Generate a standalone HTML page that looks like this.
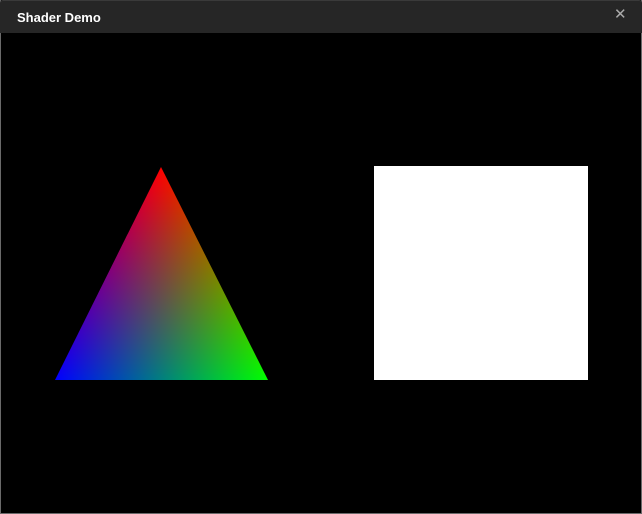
<!DOCTYPE html>
<html><head><style>
html,body{margin:0;padding:0;width:642px;height:514px;background:#000;overflow:hidden}
.frame{position:absolute;left:0;top:0;width:642px;height:514px;box-sizing:border-box;border:1px solid #6a6a6a;border-top:none}
.bar{position:absolute;left:0;top:0;width:642px;height:33px;background:#262626;border-top:1px solid #3a3a3a;box-sizing:border-box;border-radius:3px 3px 0 0}
.t{position:absolute;left:17px;top:9px;color:#fff;font:bold 13px "Liberation Sans",sans-serif}
.x{position:absolute;left:614px;top:4px;color:#aaa;font:15px "DejaVu Sans",sans-serif}
.sq{position:absolute;left:374px;top:166px;width:214px;height:214px;background:#fff}
svg{position:absolute;left:55px;top:167px}
</style></head><body>
<div class="frame"></div>
<div class="bar"><div class="t">Shader Demo</div><div class="x">✕</div></div>
<svg width="213" height="213" viewBox="0 0 213 213">
<defs>
<linearGradient id="r" gradientUnits="userSpaceOnUse" x1="106" y1="0" x2="106" y2="213"><stop offset="0" stop-color="#f00"/><stop offset="1" stop-color="#000"/></linearGradient>
<linearGradient id="b" gradientUnits="userSpaceOnUse" x1="0" y1="213" x2="170" y2="127.6"><stop offset="0" stop-color="#00f"/><stop offset="1" stop-color="#000"/></linearGradient>
<linearGradient id="g" gradientUnits="userSpaceOnUse" x1="213" y1="213" x2="42.3" y2="128"><stop offset="0" stop-color="#0f0"/><stop offset="1" stop-color="#000"/></linearGradient>
</defs>
<polygon points="106,0 213,213 0,213" fill="url(#r)"/>
<polygon points="106,0 213,213 0,213" fill="url(#b)" style="mix-blend-mode:plus-lighter"/>
<polygon points="106,0 213,213 0,213" fill="url(#g)" style="mix-blend-mode:plus-lighter"/>
</svg>
<div class="sq"></div>
</body></html>
